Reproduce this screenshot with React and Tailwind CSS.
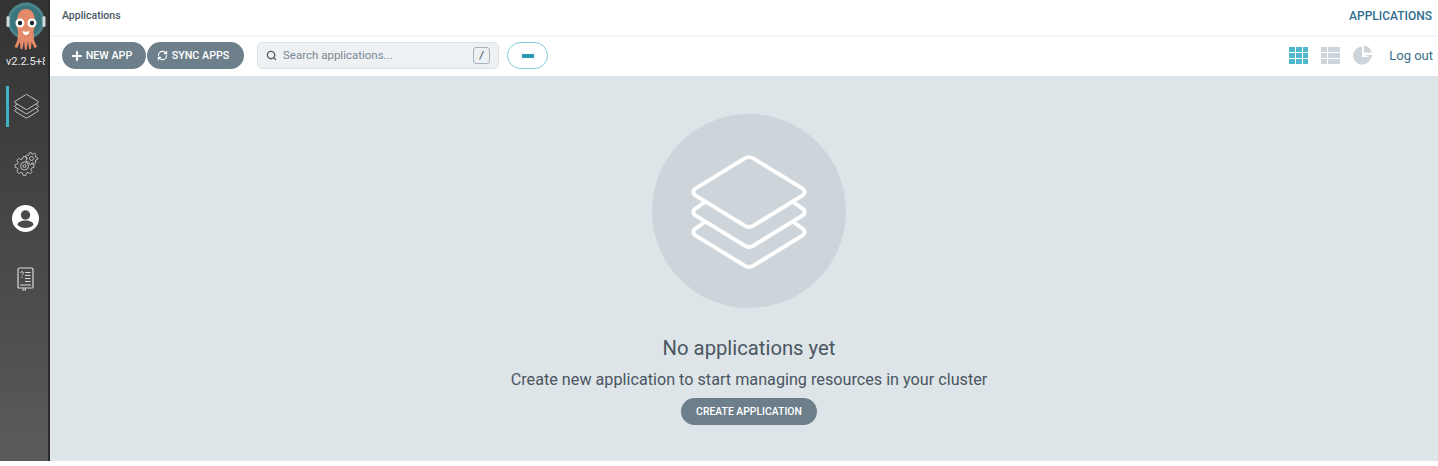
import { Plus, RefreshCw, Search } from 'lucide-react';

const font = { fontFamily: 'Roboto, sans-serif' };

const LayersIcon = ({ className, strokeWidth = 2 }) => (
  <svg viewBox="0 0 120 119" fill="none" stroke="currentColor" strokeWidth={strokeWidth} strokeLinejoin="round" className={className}>
    <path d="M55.500 3.500a9 9 0 0 1 9 0l50.500 31a4 4 0 0 1 0 7l-50.500 31a9 9 0 0 1-9 0L5 41.500a4 4 0 0 1 0-7z" />
    <path d="M15 48 5 55a4 4 0 0 0 0 7l50.500 31a9 9 0 0 0 9 0L115 62a4 4 0 0 0 0-7l-10-7" />
    <path d="M15 68.500 5 75.500a4 4 0 0 0 0 7l50.500 31a9 9 0 0 0 9 0l50.500-31a4 4 0 0 0 0-7l-10-7" />
  </svg>
);

// coordinates here are page pixels, the svg sits at the sidebar's top left
const Logo = () => (
  <svg viewBox="0 0 48 54" className="h-[54px] w-[48px]">
    <circle cx="26" cy="21" r="18.500" fill="#4a858c" />
    <circle cx="26" cy="21" r="15.500" fill="#3a747c" />
    <rect x="6.500" y="16" width="3" height="11" rx="1.500" fill="#cfdadd" />
    <rect x="42.500" y="16" width="3" height="11" rx="1.500" fill="#cfdadd" />
    <path d="M17 22c0-9 3.500-13 9-13s9 4 9 13c0 4-.5 7-1.500 9l.5 9 3 7-2.500 1-3-6-.5 7h-2l-1-8-1.500 9h-1.500l-1-9-1.500 8h-2l-.5-7-3 6-2.500-1 3-7 .5-9c-1-2-1.500-5-1.500-9z" fill="#e58a68" />
    <circle cx="20" cy="23" r="4.500" fill="#fff" />
    <circle cx="32" cy="23" r="4.500" fill="#fff" />
    <circle cx="20" cy="23" r="2.200" fill="#1c262b" />
    <circle cx="32" cy="23" r="2.200" fill="#1c262b" />
    <path d="M22.500 31c2.500 1 4.500 1 7 0-.5 3-2 4-3.500 4s-3-1-3.500-4z" fill="#fff" />
  </svg>
);

const gearPath = (cx, cy, outer, inner, teeth) => {
  const pts = [];
  const step = (Math.PI * 2) / teeth;
  for (let i = 0; i < teeth; i++) {
    const a = i * step;
    pts.push([a - step * 0.36, inner], [a - step * 0.18, outer], [a + step * 0.18, outer], [a + step * 0.36, inner]);
  }
  const d = pts.map(([a, r]) => `${(cx + r * Math.cos(a)).toFixed(2)} ${(cy + r * Math.sin(a)).toFixed(2)}`);
  return `M${d.join('L')}z`;
};

const GearsIcon = () => (
  <svg viewBox="0 0 24 24" fill="none" stroke="#d6dadc" strokeWidth="0.800" className="h-[24px] w-[24px]">
    <path d={gearPath(10.500, 14, 9.500, 7.300, 8)} strokeLinejoin="round" />
    <circle cx="10.500" cy="14" r="4" />
    <circle cx="10.500" cy="14" r="1.500" />
    <path d={gearPath(17.500, 6.500, 6, 4.500, 7)} fill="#3e3e3e" strokeLinejoin="round" />
    <circle cx="17.500" cy="6.500" r="2" />
  </svg>
);

const BookIcon = () => (
  <svg viewBox="0 0 17 24" fill="none" stroke="#d6dadc" className="h-[24px] w-[17px]">
    <path d="M1 20V2.500A1.500 1.500 0 0 1 2.500 1h12A1.500 1.500 0 0 1 16 2.500V20a1 1 0 0 1-1 1H2a1 1 0 0 1-1-1z" strokeWidth="1.200" />
    <path d="M3 18h11" strokeWidth="1" />
    <path d="M8 5.500h5.500M8 8.500h5.500M8 11.500h5.500M8 14.500h5.500" strokeWidth="1" />
    <path d="M3.500 6c0-1.800 3-1.800 3 0 0 1.200-1.500 1.200-1.500 2.500M5 10v1" strokeWidth="0.900" />
    <path d="M6 21v2.500l1.200-1 1.200 1V21" strokeWidth="0.900" />
  </svg>
);

const UserCircle = () => (
  <svg viewBox="0 0 27 27" className="h-[27px] w-[27px]">
    <circle cx="13.500" cy="13.500" r="13.500" fill="#fff" />
    <circle cx="13.500" cy="10" r="4.700" fill="#4a4a4a" />
    <path d="M5.500 20c0-3 3.500-4.500 8-4.500s8 1.500 8 4.500c-2 2-5 3-8 3s-6-1-8-3z" fill="#4a4a4a" />
  </svg>
);

const Sidebar = () => (
  <aside className="flex w-[50px] shrink-0 flex-col border-r-2 border-r-[#2a2a2a] bg-gradient-to-b from-[#333333] to-[#5b5b5b]">
    <Logo />
    <div className="mt-[1px] w-[45px] overflow-hidden whitespace-nowrap pl-[6px] text-[11px] leading-[14px] text-[#e8eaeb]">v2.2.5+8</div>
    <div className="relative mt-[17px] flex h-[41px] items-center justify-center">
      <span className="absolute left-[6px] top-0 h-[41px] w-[3px] bg-[#3fb3c4]" />
      <LayersIcon className="ml-[4px] h-[25px] w-[25px] text-[#d6dadc]" strokeWidth={4} />
    </div>
    <div className="ml-[14px] mt-[25px] h-[24px]"><GearsIcon /></div>
    <div className="ml-[12px] mt-[29px] h-[27px]"><UserCircle /></div>
    <div className="ml-[17px] mt-[35px]"><BookIcon /></div>
  </aside>
);

const PillButton = ({ children, className = '' }) => (
  <button className={`flex h-[27px] items-center justify-center rounded-full bg-[#6d7f8b] font-medium text-white ${className}`}>
    {children}
  </button>
);

const TopBar = () => (
  <>
    <div className="flex h-[37px] shrink-0 items-start justify-between border-b-2 border-[#f3f5f6] bg-white pl-[12px] pr-[6px] pt-[9px]">
      <span className="text-[10.500px] font-medium leading-[14px] text-[#495763]">Applications</span>
      <span className="text-[12px] font-medium leading-[14px] text-[#2f6f8f]">APPLICATIONS</span>
    </div>
    <div className="flex h-[39px] shrink-0 items-center bg-white pb-[2px] pl-[12px] pr-[5px]">
      <PillButton className="w-[84px] gap-[2px] pr-[6px] text-[10.750px]"><Plus size={14} strokeWidth={3.500} /><span className="pt-[1px]">NEW APP</span></PillButton>
      <PillButton className="ml-[1px] w-[97px] gap-[4px] pr-[5px] text-[10.750px]"><RefreshCw size={11} strokeWidth={2.500} /><span className="pt-[1px]">SYNC APPS</span></PillButton>
      <div className="ml-[13px] flex h-[27px] w-[242px] items-center rounded-[5px] border border-[#dce3e8] bg-[#eef1f4] pl-[8px] pr-[8px]">
        <Search size={11} strokeWidth={3} className="text-[#4f5d68]" />
        <span className="ml-[6px] text-[11.500px] text-[#7b8791]">Search applications...</span>
        <span className="ml-auto flex h-[17px] w-[17px] items-center justify-center rounded-[3px] border border-[#a9b2b9] text-[10px] font-bold italic text-[#4f5d68]">/</span>
      </div>
      <div className="ml-[8px] flex h-[27px] w-[41px] items-center justify-center rounded-full border border-[#7fcbd9] bg-white">
        <span className="h-[4px] w-[12px] bg-[#2d96b0]" />
      </div>
      <div className="ml-auto flex items-center">
        <div className="grid h-[17px] w-[19px] grid-cols-3 gap-[1px]">
          {Array.from({ length: 9 }).map((_, i) => <span key={i} className="bg-[#4fb8cc]" />)}
        </div>
        <div className="ml-[13px] grid h-[17px] w-[19px] grid-cols-[6px_1fr] gap-[1px]">
          {Array.from({ length: 6 }).map((_, i) => <span key={i} className="bg-[#ced5da]" />)}
        </div>
        <svg viewBox="0 0 22 22" className="ml-[13px] h-[21px] w-[21px]">
          <path d="M9.500 1.500a9.500 9.500 0 1 0 9.500 11h-9.500z" fill="#ced5da" />
          <path d="M11.500 0.500a9.500 9.500 0 0 1 8 7.500h-8z" fill="#ced5da" />
          <path d="M12 10.500h8a9 9 0 0 1-.8 2.500z" fill="#ced5da" />
        </svg>
        <span className="ml-[15px] text-[13px] text-[#3b6f88]">Log out</span>
      </div>
    </div>
  </>
);

const EmptyState = () => (
  <main className="flex flex-1 flex-col items-center bg-[#dee5e8] pl-[10px]">
    <div className="mt-[38px] flex h-[194px] w-[194px] items-center justify-center rounded-full bg-[#ced5da] pt-[3px]">
      <LayersIcon className="h-[116px] w-[118px] text-white" strokeWidth={4} />
    </div>
    <h1 className="mt-[27px] text-[20.250px] leading-[26px] text-[#4a5662]">No applications yet</h1>
    <p className="mt-[8px] text-[16.200px] leading-[22px] text-[#4a5662]">Create new application to start managing resources in your cluster</p>
    <PillButton className="mt-[7px] w-[136px] pt-[1px] text-[10.400px]">CREATE APPLICATION</PillButton>
  </main>
);

export default function App() {
  return (
    <div className="flex h-[466px] w-[1438px] flex-col overflow-hidden bg-white" style={font}>
      <div className="flex h-[461px] shrink-0">
        <Sidebar />
        <div className="flex min-w-0 flex-1 flex-col">
          <TopBar />
          <EmptyState />
        </div>
      </div>
    </div>
  );
}
